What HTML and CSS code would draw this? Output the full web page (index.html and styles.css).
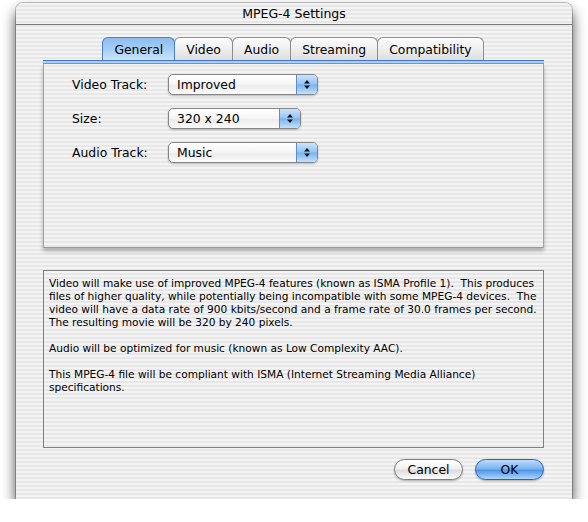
FILE: index.html
```html
<!DOCTYPE html>
<html>
<head>
<meta charset="utf-8">
<title>MPEG-4 Settings</title>
<link rel="stylesheet" href="styles.css">
</head>
<body>
<div class="window">
  <div class="titlebar">MPEG-4 Settings</div>
  <div class="content">
    <div class="tabs">
      <div class="tab active">General</div>
      <div class="tab">Video</div>
      <div class="tab">Audio</div>
      <div class="tab">Streaming</div>
      <div class="tab">Compatibility</div>
    </div>
    <div class="tabline"></div>
    <div class="pane">
      <div class="form">
        <span class="label">Video Track:</span>
        <div class="popup wide">
          <span class="value">Improved</span>
          <span class="arrows"><svg width="6" height="9" viewBox="0 0 6 9"><path d="M0 3.6L3 0L6 3.6Z M0 5.4L3 9L6 5.4Z" fill="#111"/></svg></span>
        </div>
        <span class="label">Size:</span>
        <div class="popup narrow">
          <span class="value">320 x 240</span>
          <span class="arrows"><svg width="6" height="9" viewBox="0 0 6 9"><path d="M0 3.6L3 0L6 3.6Z M0 5.4L3 9L6 5.4Z" fill="#111"/></svg></span>
        </div>
        <span class="label">Audio Track:</span>
        <div class="popup wide">
          <span class="value">Music</span>
          <span class="arrows"><svg width="6" height="9" viewBox="0 0 6 9"><path d="M0 3.6L3 0L6 3.6Z M0 5.4L3 9L6 5.4Z" fill="#111"/></svg></span>
        </div>
      </div>
    </div>
    <div class="desc">Video will make use of improved MPEG-4 features (known as ISMA Profile 1).&nbsp; This produces<br>files of higher quality, while potentially being incompatible with some MPEG-4 devices.&nbsp; The<br>video will have a data rate of 900 kbits/second and a frame rate of 30.0 frames per second.<br>The resulting movie will be 320 by 240 pixels.<br><br>Audio will be optimized for music (known as Low Complexity AAC).<br><br>This MPEG-4 file will be compliant with ISMA (Internet Streaming Media Alliance)<br>specifications.</div>
    <div class="buttons">
      <button class="btn cancel">Cancel</button>
      <button class="btn ok">OK</button>
    </div>
  </div>
</div>
</body>
</html>
```

FILE: styles.css
```css
body {
  margin: 0;
  background: #ffffff;
  font-family: "DejaVu Sans", sans-serif;
  color: #000;
}

.window {
  margin: 3px 0 0 16px;
  width: 556px;
  height: 496px;
  border-radius: 7px 7px 0 0;
  background: repeating-linear-gradient(to bottom, #f4f4f4 0 2px, #e7e7e7 2px 4px);
  box-shadow: 0 0 0 1px rgba(0, 0, 0, 0.22), 0 8px 14px rgba(0, 0, 0, 0.75);
  display: flex;
  flex-direction: column;
}

.titlebar {
  height: 21px;
  line-height: 21px;
  border-bottom: 1px solid #7b7b7b;
  text-align: center;
  font-size: 12.5px;
  border-radius: 7px 7px 0 0;
}

.content {
  flex: 1;
  display: flex;
  flex-direction: column;
  padding: 12px 28px 0 27px;
}

.tabs {
  display: flex;
  justify-content: center;
  height: 23px;
}

.tab {
  padding: 0 11px;
  margin-left: -1px;
  border: 1px solid #8e8e8e;
  border-bottom: none;
  border-radius: 6px 6px 0 0;
  background: linear-gradient(#fcfcfc, #ececec 60%, #dedede);
  font-size: 12.4px;
  line-height: 23px;
}

.tab.active {
  border-color: #4a7fcf;
  background: linear-gradient(#8dbcf0, #a9cff6 55%, #cbe4fb);
  position: relative;
}

.tabline {
  height: 4px;
  box-sizing: border-box;
  border-top: 1px solid #3e76cf;
  border-bottom: 1px solid #6d98d6;
  background: #a9cff6;
}

.pane {
  height: 184px;
  box-sizing: border-box;
  border-left: 1px solid #a3a3a3;
  border-right: 1px solid #a3a3a3;
  border-bottom: 1px solid #9a9a9a;
  box-shadow: 0 3px 4px rgba(0, 0, 0, 0.28);
  padding: 10px 0 0 28px;
}

.form {
  display: grid;
  grid-template-columns: 96px auto;
  row-gap: 13px;
  align-items: center;
  justify-items: start;
}

.label {
  font-size: 12.4px;
}

.popup {
  height: 21px;
  box-sizing: border-box;
  display: flex;
  border: 1px solid #858585;
  border-radius: 5px;
  background: linear-gradient(#ffffff, #f5f5f5 50%, #ebebeb 52%, #fbfbfb);
  box-shadow: 0 1px 2px rgba(0, 0, 0, 0.25);
  overflow: hidden;
}

.popup.wide { width: 150px; }
.popup.narrow { width: 133px; }

.value {
  flex: 1;
  padding-left: 8px;
  font-size: 12.4px;
  line-height: 19px;
}

.arrows {
  width: 20px;
  border-left: 1px solid #5a8bd3;
  background: linear-gradient(#cbe4fc, #94c3f3 48%, #78b2ef 52%, #c2e2fd);
  display: flex;
  align-items: center;
  justify-content: center;
}

.desc {
  margin-top: 22px;
  height: 178px;
  box-sizing: border-box;
  border: 1px solid #808080;
  padding: 6px 5px;
  font-size: 10.6px;
  line-height: 13px;
  white-space: nowrap;
}

.buttons {
  display: flex;
  justify-content: flex-end;
  gap: 12px;
  margin-top: 11px;
}

.btn {
  width: 69px;
  height: 21px;
  padding: 0;
  box-sizing: border-box;
  border-radius: 11px;
  font-family: "DejaVu Sans", sans-serif;
  font-size: 12.4px;
  color: #000;
  box-shadow: 0 1px 2px rgba(0, 0, 0, 0.3);
}

.cancel {
  border: 1px solid #7d7d7d;
  background: linear-gradient(#ffffff, #f1f1f1 45%, #dcdcdc 55%, #ffffff);
}

.ok {
  border: 1px solid #2d5fb5;
  background: linear-gradient(#bddcfb, #7cb4ef 45%, #5396e7 55%, #acd6fd);
}
```
